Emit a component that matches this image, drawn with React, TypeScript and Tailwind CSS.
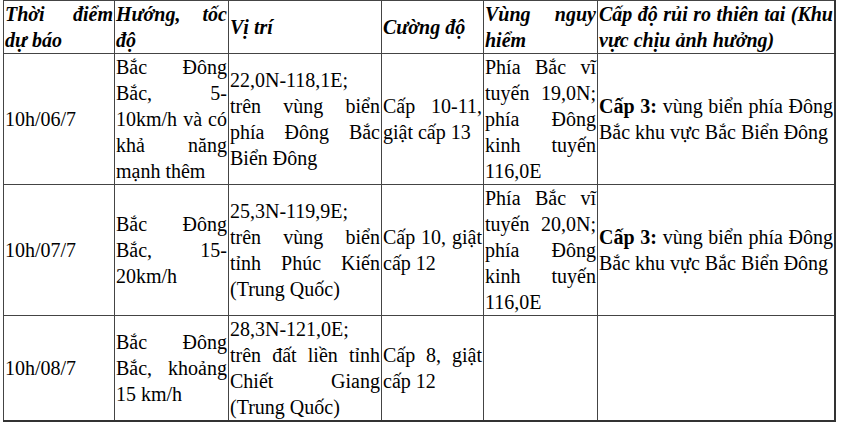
type Row = {
  time: string;
  direction: string;
  position: string;
  strength: string;
  danger: string;
  risk: string;
};

const rows: Row[] = [
  {
    time: "10h/06/7",
    direction: "Bắc Đông Bắc, 5-10km/h và có khả năng mạnh thêm",
    position: "22,0N-118,1E; trên vùng biển phía Đông Bắc Biển Đông",
    strength: "Cấp 10-11, giật cấp 13",
    danger: "Phía Bắc vĩ tuyến 19,0N; phía Đông kinh tuyến 116,0E",
    risk: "vùng biển phía Đông Bắc khu vực Bắc Biển Đông",
  },
  {
    time: "10h/07/7",
    direction: "Bắc Đông Bắc, 15-20km/h",
    position: "25,3N-119,9E; trên vùng biển tỉnh Phúc Kiến (Trung Quốc)",
    strength: "Cấp 10, giật cấp 12",
    danger: "Phía Bắc vĩ tuyến 20,0N; phía Đông kinh tuyến 116,0E",
    risk: "vùng biển phía Đông Bắc khu vực Bắc Biển Đông",
  },
  {
    time: "10h/08/7",
    direction: "Bắc Đông Bắc, khoảng 15 km/h",
    position: "28,3N-121,0E; trên đất liền tỉnh Chiết Giang (Trung Quốc)",
    strength: "Cấp 8, giật cấp 12",
    danger: "",
    risk: "",
  },
];

const headers = [
  "Thời điểm dự báo",
  "Hướng, tốc độ",
  "Vị trí",
  "Cường độ",
  "Vùng nguy hiểm",
  "Cấp độ rủi ro thiên tai (Khu vực chịu ảnh hưởng)",
];

const cell =
  "border border-[#444] px-px py-0 align-middle text-justify font-['Liberation_Serif'] text-[20px] leading-[26px] text-black";

export default function App() {
  return (
    <div className="w-[842px] h-[428px] bg-white overflow-hidden font-['Liberation_Serif'] text-[20px] leading-[26px] text-black">
      <table className="ml-[3px] w-[833px] table-fixed border-collapse border-r-2 border-b-2 border-[#333] font-['Liberation_Serif']">
        <colgroup>
          <col className="w-[111px]" />
          <col className="w-[114px]" />
          <col className="w-[153px]" />
          <col className="w-[102px]" />
          <col className="w-[114px]" />
          <col />
        </colgroup>
        <thead>
          <tr>
            {headers.map((h) => (
              <td key={h} className={`${cell} font-bold italic`}>
                {h}
              </td>
            ))}
          </tr>
        </thead>
        <tbody>
          {rows.map((row) => (
            <tr key={row.time}>
              <td className={cell}>{row.time}</td>
              <td className={cell}>{row.direction}</td>
              <td className={cell}>{row.position}</td>
              <td className={cell}>{row.strength}</td>
              <td className={cell}>{row.danger}</td>
              <td className={cell}>
                {row.risk ? (
                  <>
                    <b>Cấp 3:</b> {row.risk}
                  </>
                ) : null}
              </td>
            </tr>
          ))}
        </tbody>
      </table>
    </div>
  );
}
